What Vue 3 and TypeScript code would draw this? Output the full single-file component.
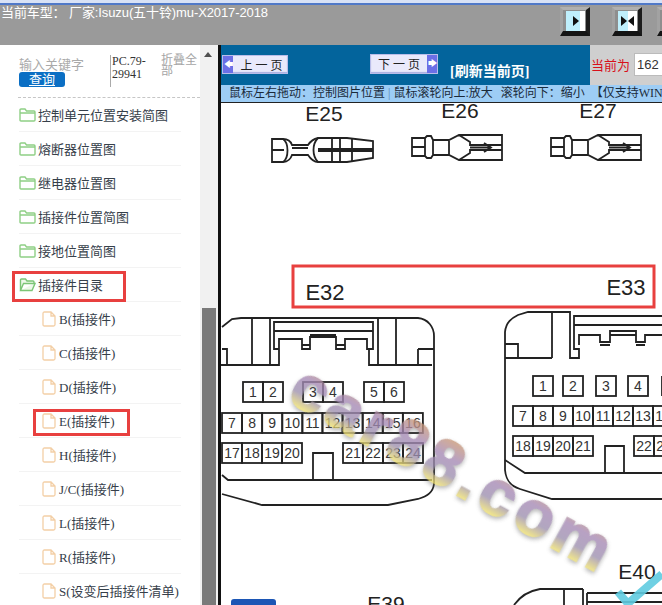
<script setup lang="ts">
interface TreeRow {
  label: string
  child?: boolean
  open?: boolean
}

const rows: TreeRow[] = [
  { label: '控制单元位置安装简图' },
  { label: '熔断器位置图' },
  { label: '继电器位置图' },
  { label: '插接件位置简图' },
  { label: '接地位置简图' },
  { label: '插接件目录', open: true },
  { label: 'B(插接件)', child: true },
  { label: 'C(插接件)', child: true },
  { label: 'D(插接件)', child: true },
  { label: 'E(插接件)', child: true },
  { label: 'H(插接件)', child: true },
  { label: 'J/C(插接件)', child: true },
  { label: 'L(插接件)', child: true },
  { label: 'R(插接件)', child: true },
  { label: 'S(设变后插接件清单)', child: true },
]

interface Pin {
  n: number
  x: number
  y: number
}

function line(start: number, x: number, y: number, count: number, step = 20): Pin[] {
  return Array.from({ length: count }, (_, i) => ({ n: start + i, x: x + i * step, y }))
}

const pins32: Pin[] = [
  ...line(1, 243, 382, 2),
  ...line(3, 303, 382, 2),
  ...line(5, 364, 382, 2),
  ...line(7, 222, 413, 10, 20.1),
  ...line(17, 222, 443, 4),
  ...line(21, 343, 443, 4),
]

const pins33: Pin[] = [
  { n: 1, x: 533, y: 376 },
  { n: 2, x: 563, y: 376 },
  { n: 3, x: 596, y: 376 },
  { n: 4, x: 628, y: 376 },
  ...line(7, 513, 406, 8),
  ...line(18, 513, 436, 4),
  ...line(22, 634, 436, 2),
]

const smallConnectors = [
  { label: 'E26', x: 412, tx: 460 },
  { label: 'E27', x: 551, tx: 598 },
]
</script>

<template>
  <div class="page">
    <header class="top">
      <div class="top__title">当前车型： 厂家:Isuzu(五十铃)mu-X2017-2018</div>
      <div class="top__tools">
        <button class="tool">
          <span class="tool__face"><span class="tool__half"></span><i class="arr arr--r"></i></span>
        </button>
        <button class="tool">
          <span class="tool__face tool__face--split"><span class="tool__half"></span><i class="arr arr--r"></i><i class="arr arr--l"></i></span>
        </button>
        <button class="tool tool--cut"></button>
      </div>
    </header>

    <div class="body">
      <aside class="side">
        <div class="side__inner">
          <div class="search">
            <div class="search__left">
              <div class="search__hint">输入关键字</div>
              <a class="search__btn">查询</a>
            </div>
            <div class="search__code">PC.79-<br />29941</div>
            <div class="search__fold">折叠全部</div>
          </div>
          <ul class="tree">
            <li
              v-for="row in rows"
              :key="row.label"
              class="tree__row"
              :class="{ 'tree__row--child': row.child }"
            >
              <svg v-if="row.child" class="ico-file" width="14" height="16" viewBox="0 0 14 16">
                <path d="M1 2.5Q1 1 2.5 1H9L13 5V13.5Q13 15 11.5 15H2.5Q1 15 1 13.5Z M9 1V5H13" fill="none" stroke="#f3cfa6" stroke-width="1.3" />
              </svg>
              <svg v-else-if="row.open" class="ico-folder" width="17" height="14" viewBox="0 0 17 14">
                <path d="M1.5 12.5V2Q1.5 1 2.5 1H6.5L8 3H14Q15 3 15 4V5.5H4.5L1.5 12.5H13L16 5.5H15" fill="#eef8ea" stroke="#7cc576" stroke-width="1.4" />
              </svg>
              <svg v-else class="ico-folder" width="17" height="14" viewBox="0 0 17 14">
                <path d="M1 2Q1 1 2 1H6L7.5 3H15Q16 3 16 4V12Q16 13 15 13H2Q1 13 1 12Z M1 5H16" fill="#fff" stroke="#8fcf85" stroke-width="1.4" />
              </svg>
              <span>{{ row.label }}</span>
            </li>
          </ul>
          <span class="mark mark--parent"></span>
          <span class="mark mark--child"></span>
        </div>
        <div class="scroll">
          <span class="scroll__up"></span>
          <span class="scroll__thumb"></span>
        </div>
      </aside>

      <main class="main">
        <div class="bar">
          <div class="bar__nav">
            <a class="page-btn">
              <span class="page-btn__arrow">🡄</span>
              <span class="page-btn__text">上 一 页</span>
            </a>
            <a class="page-btn page-btn--next">
              <span class="page-btn__text">下 一 页</span>
              <span class="page-btn__arrow">🡆</span>
            </a>
            <span class="bar__refresh">[刷新当前页]</span>
          </div>
          <div class="bar__current">
            <span>当前为</span>
            <input class="bar__input" value="162" />
          </div>
        </div>
        <div class="hint">
          <span>鼠标左右拖动：控制图片位置</span>
          <span class="hint__pipe">|</span>
          <span>鼠标滚轮向上:放大</span>
          <span class="hint__next">滚轮向下：缩小</span>
          <span class="hint__note">【仅支持WIN10系统】</span>
        </div>

        <div class="canvas">
          <svg class="sheet" width="441" height="502" viewBox="221 103 441 502">
            <defs>
              <linearGradient id="wm" x1="0" y1="0" x2="0" y2="1">
                <stop offset="0.1" stop-color="#d09a66" />
                <stop offset="0.4" stop-color="#a487b4" />
                <stop offset="0.62" stop-color="#9c8fae" />
                <stop offset="0.8" stop-color="#e8da72" />
                <stop offset="1" stop-color="#d9c95a" />
              </linearGradient>
            </defs>

            <!-- top row -->
            <text class="lbl" x="324" y="121">E25</text>
            <g class="draw">
              <path d="M272 139H283C288 139 291 142 292 145H308C310 142 313 139 318 138H347L373 141V158L347 162H318C313 162 310 158 308 155H292C291 158 288 162 283 162H272Z" />
              <path d="M272 150H284M283 139C289 143 289 158 283 162M292 148H308M318 138C312 144 312 156 318 162M318 149H373M318 151H373M332 138V162M340 138V162M352 139V161" />
            </g>
            <g v-for="c in smallConnectors" :key="c.label" class="draw">
              <text class="lbl" :x="c.tx" y="118">{{ c.label }}</text>
              <path :transform="`translate(${c.x - 412} 0)`" d="M412 138H425L427 136H431L433 140H449L459 135H502V160H459L449 155H433L431 158H427L425 156H412ZM412 147H425M425 138V156M433 140V155M449 140V155M459 135L470 142V145H502M459 160L470 153V150H502M470 147.5H490M484 143L491 147.5L484 152" />
            </g>

            <!-- red frame over the two titles -->
            <rect x="293" y="266" width="361" height="41" fill="none" stroke="#e8403f" stroke-width="3" />
            <text class="lbl lbl--big" x="325" y="300">E32</text>
            <text class="lbl lbl--big" x="626" y="295">E33</text>

            <!-- E32 -->
            <g class="draw">
              <path d="M222 327L232 319L241 318H418C428 319 434 327 434 336V484C433 492 428 496 418 499L388 505H262L222 494" />
              <path d="M222 475L228 480H432M252 318V365M270 318V365M378 318V365M396 318V365M222 349H227V365M220 365H279V349H274V322H373V349H369V365H432M274 331H373M279 349V339H302V349H310V337H336V349H345V339H367V349H369M302 345H310M336 345H345M310 335H336M418 349H434M418 349V365" />
              <path d="M313 480V453H333V480" />
              <g v-for="p in pins32" :key="'a' + p.n">
                <rect :x="p.x" :y="p.y" width="20" height="20" />
                <text class="pin" :x="p.x + 10" :y="p.y + 15">{{ p.n }}</text>
              </g>
            </g>

            <!-- E33 -->
            <g class="draw">
              <path d="M505 470V332C506 322 512 318 518 315L528 312H570V358H579V349H574V316H662M552 312V358M574 325H662M505 344H518V358M505 358H552M579 345V335H600V342H610V331H636V342H645V335H662M610 335H636M600 345H610M636 345H645" />
              <path d="M505 460L525 473H662M505 470C506 480 510 486 520 489L552 499H662M605 473V446H624V473" />
              <g v-for="p in pins33" :key="'b' + p.n">
                <rect :x="p.x" :y="p.y" width="20" height="20" />
                <text class="pin" :x="p.x + 10" :y="p.y + 15">{{ p.n }}</text>
              </g>
              <path d="M662 376V396" />
            </g>

            <!-- bottom row, cut off by the window -->
            <rect x="231" y="599" width="45" height="12" rx="3" fill="#1c56b5" />
            <text class="lbl" x="386" y="611">E39</text>
            <text class="lbl" x="637" y="579">E40</text>
            <g class="draw">
              <path d="M514 605C519 598 528 591 540 589H583M564 589V605M583 589V605M587 593H662M587 602H662M587 593V605" />
            </g>
            <path d="M625 606L662 574M618 592L630 606" fill="none" stroke="#5fcbe0" stroke-width="8" opacity="0.9" />

            <!-- site watermark -->
            <text class="wm" transform="translate(285 400) rotate(29)" fill="url(#wm)" stroke="url(#wm)">car88.com</text>
          </svg>
        </div>
      </main>
    </div>
  </div>
</template>

<style scoped>
.page {
  width: 662px;
  height: 605px;
  overflow: hidden;
  display: flex;
  flex-direction: column;
  font-family: "Liberation Serif", "Noto Sans CJK SC", serif;
}

.top {
  flex: 0 0 45px;
  display: flex;
  justify-content: space-between;
  background: linear-gradient(#d8e2f6 0, #d8e2f6 3px, #5079c8 3px, #5079c8 5px, #9a9a9a 5px);
  overflow: hidden;
}
.top__title {
  padding: 5px 0 0 1px;
  font: 13px/16px "Liberation Sans", "Noto Sans CJK SC", sans-serif;
  letter-spacing: -0.1px;
  color: #fff;
  white-space: nowrap;
}
.top__tools {
  display: flex;
  gap: 22px;
  padding-top: 7px;
  width: 102px;
  flex: none;
}
.tool {
  flex: none;
  width: 30px;
  height: 29px;
  padding: 0;
  box-sizing: border-box;
  display: flex;
  background: #8e8e8e;
  border-style: solid;
  border-width: 3px 4px 5px 3px;
  border-color: #b0b0b0 #1c1c1c #141414 #a2a2a2;
}
.tool--cut {
  margin-left: -7px;
}
.tool__face {
  position: relative;
  flex: 1;
  margin: 1px 1px 0 3px;
  display: flex;
  align-items: center;
  justify-content: center;
  background: #bfeffc;
}
.tool__half {
  position: absolute;
  right: 0;
  top: 0;
  bottom: 0;
  width: 5px;
  background: #fff;
}
.tool__face--split .tool__half {
  width: 9px;
}
.arr {
  position: relative;
  width: 0;
  height: 0;
  border-top: 5px solid transparent;
  border-bottom: 5px solid transparent;
}
.arr--r {
  border-left: 6px solid #111;
}
.arr--l {
  border-right: 6px solid #111;
  margin-left: 1px;
}

.body {
  flex: 1;
  min-height: 0;
  display: flex;
}

.side {
  flex: 0 0 218px;
  display: flex;
  background: #fff;
  border-right: 3px solid #111;
}
.side__inner {
  position: relative;
  flex: 0 0 200px;
  overflow: hidden;
}
.search {
  height: 52px;
  margin-left: 18px;
  display: flex;
  border-bottom: 1px dashed #c6c6c6;
}
.search__left {
  width: 92px;
  padding: 12px 0 0 1px;
  box-sizing: border-box;
}
.search__hint {
  font-size: 13px;
  line-height: 15px;
  color: #aaa;
}
.search__btn {
  display: block;
  width: 46px;
  height: 15px;
  border-radius: 3px;
  background: #0b6fc4;
  color: #fff;
  font-size: 13px;
  line-height: 15px;
  text-align: center;
  text-decoration: underline;
}
.search__code {
  width: 51px;
  height: 32px;
  margin-top: 10px;
  padding-left: 1px;
  box-sizing: border-box;
  border-left: 1px solid #aaa;
  font-size: 12px;
  line-height: 13px;
  color: #333;
}
.search__fold {
  width: 37px;
  margin-top: 10px;
  font-size: 12px;
  line-height: 11px;
  color: #a5a5a5;
}

.tree {
  list-style: none;
  margin: 0;
  padding: 0;
}
.tree__row {
  height: 34px;
  margin: 0 19px;
  display: flex;
  align-items: center;
  gap: 2px;
  font-size: 13px;
  color: #36404a;
  border-bottom: 1px solid #f3f3f3;
  box-sizing: border-box;
  white-space: nowrap;
}
.tree__row--child {
  padding-left: 23px;
  gap: 3px;
}
.mark {
  position: absolute;
  box-sizing: border-box;
  border: 3px solid #e8403f;
}
.mark--parent {
  left: 12px;
  top: 226px;
  width: 114px;
  height: 31px;
}
.mark--child {
  left: 33px;
  top: 364px;
  width: 97px;
  height: 27px;
}

.scroll {
  position: relative;
  flex: 0 0 18px;
  background: #f1f1f1;
}
.scroll__up {
  position: absolute;
  left: 4px;
  top: 7px;
  border-left: 4px solid transparent;
  border-right: 4px solid transparent;
  border-bottom: 5px solid #505050;
}
.scroll__thumb {
  position: absolute;
  left: 2px;
  right: 2px;
  top: 263px;
  bottom: 0;
  background: #7a7a7a;
}

.main {
  flex: 1;
  min-width: 0;
  display: flex;
  flex-direction: column;
}
.bar {
  flex: 0 0 40px;
  display: flex;
}
.bar__nav {
  flex: 0 0 369px;
  display: flex;
  background: #03649c;
  padding: 10px 0 0 1px;
  box-sizing: border-box;
}
.page-btn {
  display: flex;
  align-items: center;
  width: 66px;
  height: 19px;
  box-sizing: border-box;
  background: #e9e9fb;
  border: 1px solid #b9bde9;
  box-shadow: inset 0 -1px 1px #a9aee0;
  font-size: 12px;
  color: #222;
}
.page-btn--next {
  margin: -1px 0 0 82px;
  width: 68px;
  height: 20px;
}
.page-btn__arrow {
  flex: 0 0 10px;
  height: 100%;
  background: #6b6fe6;
  color: #fff;
  font: 9px/17px "DejaVu Sans", sans-serif;
  text-align: center;
  overflow: hidden;
}
.page-btn__text {
  flex: 1;
  padding-left: 3px;
  text-align: center;
  white-space: nowrap;
}
.page-btn--next .page-btn__text {
  padding-left: 0;
}
.bar__refresh {
  margin: 5px 0 0 12px;
  font-size: 14px;
  font-weight: 700;
  color: #fff;
  white-space: nowrap;
}
.bar__current {
  flex: 1;
  display: flex;
  align-items: center;
  gap: 4px;
  padding-bottom: 2px;
  padding-left: 1px;
  background: #cfcfcf;
  color: #d8101a;
  font-size: 13px;
  white-space: nowrap;
}
.bar__input {
  width: 40px;
  height: 23px;
  padding: 0 2px;
  box-sizing: border-box;
  border: 1px solid #bbb;
  background: #fff;
  font: 13px "Liberation Sans", sans-serif;
  color: #333;
}
.hint {
  flex: 0 0 18px;
  display: flex;
  padding-left: 8px;
  background: #9dcdf5;
  border-bottom: 1px solid #222;
  box-sizing: border-box;
  font-size: 12px;
  line-height: 17px;
  color: #1a2a3a;
  white-space: nowrap;
  overflow: hidden;
}
.hint__pipe {
  margin: 0 3px;
  color: #5a86b0;
}
.hint__next {
  margin-left: 8px;
}
.hint__note {
  margin-left: 6px;
}
.canvas {
  flex: 1;
  min-height: 0;
  background: #fff;
  overflow: hidden;
}
.sheet {
  display: block;
}
.draw {
  fill: none;
  stroke: #222;
  stroke-width: 1.8;
}
.lbl {
  font: 21px "Liberation Sans", sans-serif;
  fill: #222;
  stroke: none;
  text-anchor: middle;
}
.lbl--big {
  font-size: 22px;
}
.pin {
  font: 14px "Liberation Sans", sans-serif;
  fill: #333;
  stroke: none;
  text-anchor: middle;
}
.wm {
  font: 700 64px "Liberation Sans", sans-serif;
  letter-spacing: 5px;
  stroke-width: 1.5;
  opacity: 0.78;
  filter: drop-shadow(1px 2px 2px rgba(90, 90, 90, 0.55));
}
</style>
